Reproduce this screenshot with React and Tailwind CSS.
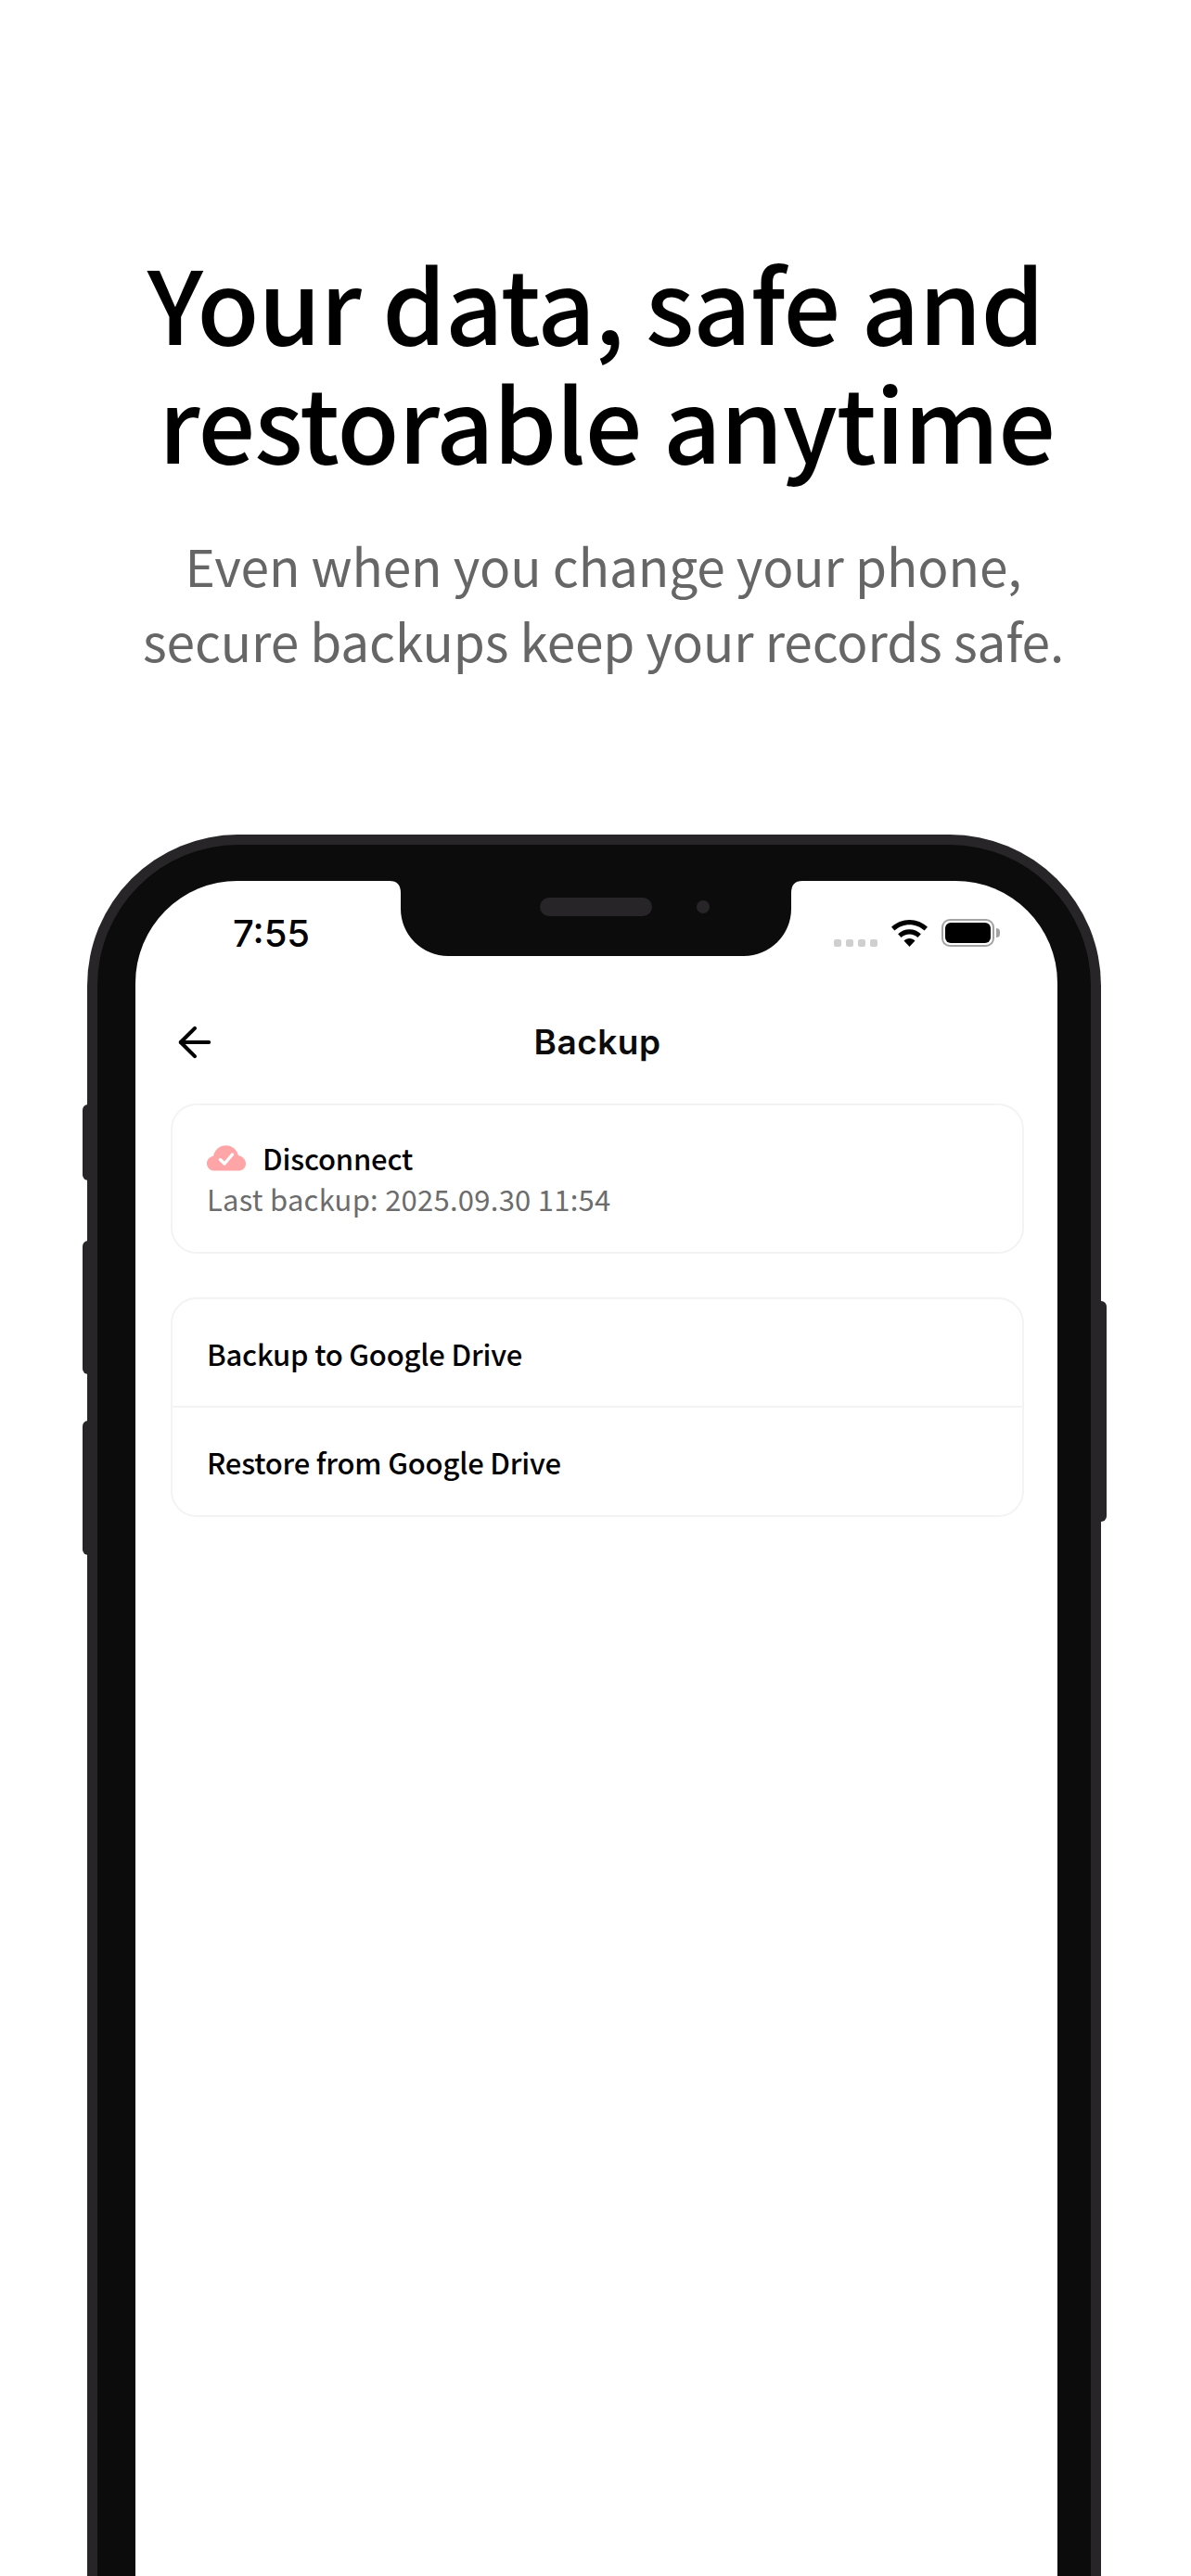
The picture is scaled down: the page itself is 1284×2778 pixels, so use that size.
import React from 'react'
import { ArrowLeft } from 'lucide-react'

const cjk = { fontFamily: '"Noto Sans CJK KR", "Noto Sans", sans-serif' }

function CloudCheck(){
  return (
    <svg width="42" height="28" viewBox="0 0 42 28">
      <path d="M8 27.500C3.500 27.500 0 24 0 19.700c0-4 3-7.300 7-7.900C8.500 5 14 .3 20.500.3c6.500 0 12 4.500 13.500 10.900 4.600.6 8 4.300 8 8.700 0 4.200-3.500 7.600-8 7.600H8Z" fill="#ffa5a7" />
      <path d="M14.500 15.500l4.500 4.500 8.500-10" fill="none" stroke="#fff" strokeWidth="3.400" strokeLinecap="round" strokeLinejoin="round" />
    </svg>
  )
}

function Wifi(){
  return (
    <svg width="39" height="29" viewBox="0 0 39 29">
      <path d="M19.500 0C12 0 5.200 3 0 7.800l3.400 3.800C7.600 7.700 13.300 5.300 19.500 5.300S31.400 7.700 35.600 11.600L39 7.800C33.800 3 27 0 19.500 0Z" fill="#000" />
      <path d="M19.500 10.200c-4.800 0-9.200 1.900-12.400 5l3.500 3.800c2.300-2.200 5.400-3.500 8.900-3.500s6.600 1.300 8.900 3.500l3.500-3.800c-3.200-3.100-7.600-5-12.400-5Z" fill="#000" />
      <path d="M19.500 20c-2.300 0-4.400.9-6 2.400l6 6.600 6-6.600c-1.600-1.500-3.700-2.400-6-2.400Z" fill="#000" />
    </svg>
  )
}

function StatusBar(){
  return (
    <div className="h-[142px] flex items-start justify-between pl-[105px] pr-[62px]">
      <span className="mt-[32px] text-[40px] leading-[50px] font-medium text-black" style={{ fontFamily: 'Inter, sans-serif' }}>7:55</span>
      <div className="flex items-center mt-[41px]">
        <div className="flex gap-[5px] mt-[22px] mr-[15px]">
          <span className="w-2 h-2 rounded-[2px] bg-[#cfcfcf]" />
          <span className="w-2 h-2 rounded-[2px] bg-[#cfcfcf]" />
          <span className="w-2 h-2 rounded-[2px] bg-[#cfcfcf]" />
          <span className="w-2 h-2 rounded-[2px] bg-[#cfcfcf]" />
        </div>
        <Wifi />
        <div className="ml-[15px] w-[57px] h-[30px] rounded-[9px] border-2 border-[#a3a3a3] p-[2px]">
          <div className="w-full h-full rounded-[6px] bg-black" />
        </div>
        <div className="ml-[2px] w-[4px] h-[10px] rounded-r-full bg-[#a3a3a3]" />
      </div>
    </div>
  )
}

function Screen(){
  return (
    <div className="bg-white rounded-t-[110px] h-[1900px]">
      <StatusBar />
      <div className="relative h-[64px] flex items-center justify-center">
        <ArrowLeft className="absolute left-[38px] top-[6px]" size={52} strokeWidth={1.9} color="#000" />
        <span className="ml-[2px] text-[37px] tracking-[0.5px] font-semibold text-[#0b0b0b]" style={{ fontFamily: 'Inter, sans-serif' }}>Backup</span>
      </div>
      <div className="pl-[38px] pr-[36px] mt-[34px]" style={cjk}>
        <div className="h-[162px] rounded-[28px] border-2 border-[#f3f3f4] pl-[37px] pt-[33px]">
          <div className="flex items-center gap-[18px]">
            <CloudCheck />
            <span className="text-[31px] tracking-[-0.2px] leading-[48px] font-medium text-black">Disconnect</span>
          </div>
          <div className="text-[31px] tracking-[0.25px] leading-[40px] mt-0 text-[#6c6c6c]">Last backup: 2025.09.30 11:54</div>
        </div>
        <div className="mt-[47px] rounded-[28px] border-2 border-[#f3f3f4]">
          <div className="h-[115px] pt-[4px] flex items-center pl-[37px] text-[31px] tracking-[-0.2px] font-medium text-black">Backup to Google Drive</div>
          <div className="h-[118px] pt-[2px] flex items-center pl-[37px] text-[31px] tracking-[-0.2px] font-medium text-black border-t-2 border-[#f3f3f4]">Restore from Google Drive</div>
        </div>
      </div>
    </div>
  )
}

export default function App(){
  return (
    <div className="w-[1284px] h-[2778px] overflow-hidden bg-white" style={cjk}>
      <div className="pt-[261px] text-center">
        <h1 className="text-[109px] tracking-[-1px] leading-[128px] font-medium text-black">Your data, safe and<br /><span className="inline-block pl-[24px]">restorable anytime</span></h1>
        <p className="mt-[52px] pl-[17px] text-[55px] tracking-[-0.12px] leading-[81px] text-[#666666]">Even when you change your phone,<br />secure backups keep your records safe.</p>
      </div>
      <div className="relative ml-[94px] mt-[169px] w-[1093px] rounded-t-[163px] border-[11px] border-b-0 border-[#272528] bg-[#0c0c0c] pl-[41px] pr-[36px] pt-[39px]">
        <span className="absolute left-[-16px] top-[280px] w-[16px] h-[82px] rounded-l-[6px] bg-[#272528]" />
        <span className="absolute left-[-16px] top-[427px] w-[16px] h-[144px] rounded-l-[6px] bg-[#272528]" />
        <span className="absolute left-[-16px] top-[621px] w-[16px] h-[145px] rounded-l-[6px] bg-[#272528]" />
        <span className="absolute right-[-17px] top-[492px] w-[17px] h-[238px] rounded-r-[6px] bg-[#272528]" />
        <svg className="absolute left-[315px] top-[39px]" width="445" height="81" viewBox="0 0 445 81">
          <path d="M0 0H445Q433 0 433 13V30A51 51 0 0 1 382 81H63A51 51 0 0 1 12 30V13Q12 0 0 0Z" fill="#0c0c0c" />
          <rect x="162" y="18" width="121" height="20" rx="10" fill="#272528" />
          <circle cx="338" cy="28" r="7" fill="#272528" />
        </svg>
        <Screen />
      </div>
    </div>
  )
}
